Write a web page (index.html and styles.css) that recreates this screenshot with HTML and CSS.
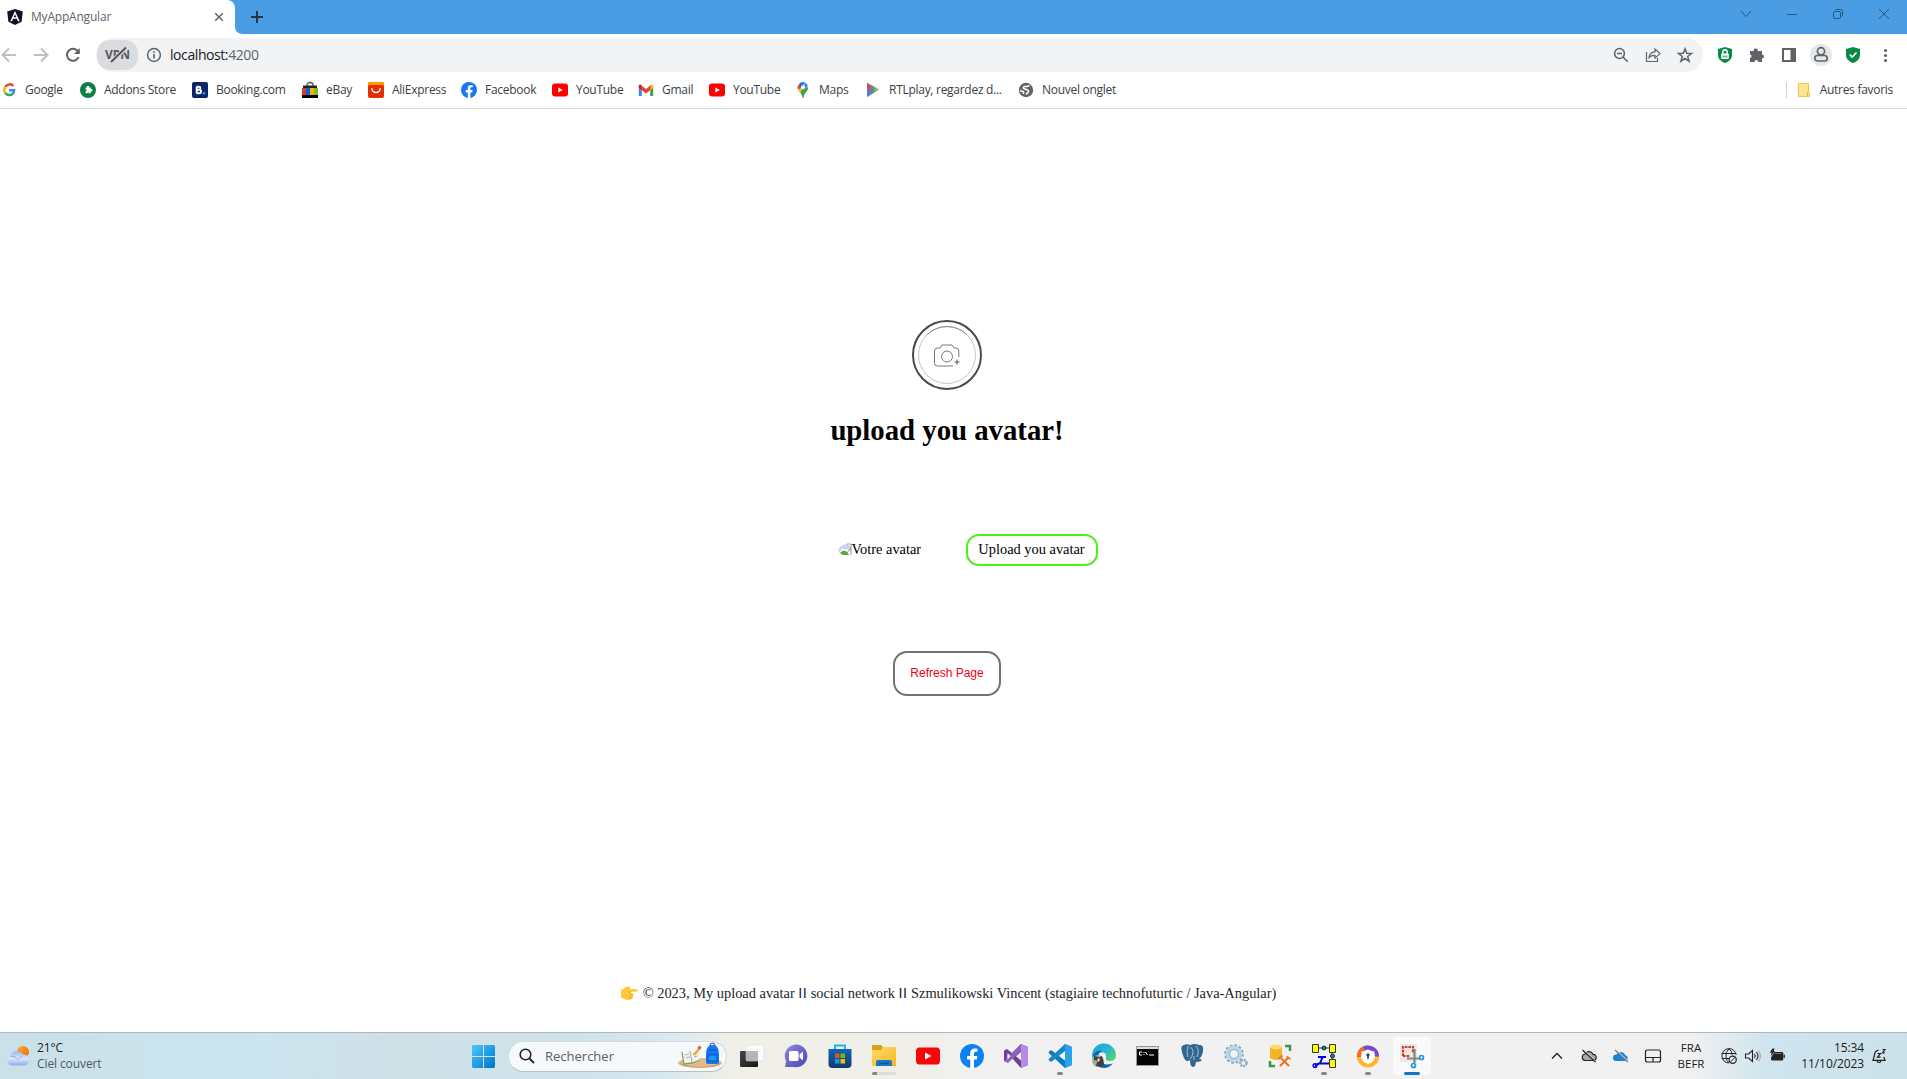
FILE: index.html
```html
<!DOCTYPE html>
<html lang="fr">
<head>
<meta charset="utf-8">
<title>MyAppAngular</title>
<link rel="stylesheet" href="styles.css">
</head>
<body>
<header class="tabstrip">
  <div class="tab">
    <svg class="i16" viewBox="0 0 16 16"><path d="M8 0l7.800 2.600-1.200 10.200L8 16l-6.600-3.200L.2 2.600z" fill="#0c1422"/><path d="M8 2L3.300 12.200h1.800l1-2.400h3.800l1 2.400h1.800zM8 5.200l1.300 3.100H6.700z" fill="#fff" fill-rule="evenodd"/></svg>
    <span class="tab-title">MyAppAngular</span>
    <svg class="tab-close" viewBox="0 0 10 10"><path d="M1.200 1.200l7.600 7.600M8.800 1.200L1.200 8.800" stroke="#5f6368" stroke-width="1.500"/></svg>
  </div>
  <svg class="tab-curve" viewBox="0 0 8 8"><path d="M0 0Q0 8 8 8H0z" fill="#fff"/></svg>
  <svg class="new-tab" viewBox="0 0 12 12"><path d="M6 0v12M0 6h12" stroke="#26323e" stroke-width="2"/></svg>
  <div class="win">
    <svg viewBox="0 0 12 12"><path d="M1 3l5 5.500L11 3"/></svg>
    <svg viewBox="0 0 12 12"><path d="M1 6.500h10"/></svg>
    <svg viewBox="0 0 12 12"><rect x="1.500" y="3.500" width="7" height="7" rx="1.300"/><path d="M3.500 1.500h5a2 2 0 0 1 2 2v5"/></svg>
    <svg viewBox="0 0 12 12"><path d="M1 1l10 10M11 1L1 11"/></svg>
  </div>
</header>

<div class="toolbar">
  <div class="nav">
    <svg class="i16 dim" viewBox="0 0 16 16"><path d="M15 8H2M8 1.500L1.500 8 8 14.500"/></svg>
    <svg class="i16 dim" viewBox="0 0 16 16"><path d="M1 8h13M8 1.500L14.500 8 8 14.500"/></svg>
    <svg class="i16 dark" viewBox="0 0 16 16"><path d="M13.600 10A6 6 0 1 1 12.800 4.200"/><path d="M14.800 1v6H9z" fill="#5f6368" stroke="none"/></svg>
  </div>
  <div class="address">
    <div class="vpn"><span>VPN</span><svg viewBox="0 0 24 18"><path d="M4.500 16.500L20 2" stroke="#dadce0" stroke-width="4"/><path d="M5 16L20 1.500" stroke="#4f5257" stroke-width="1.800"/></svg></div>
    <svg class="info" viewBox="0 0 16 16"><circle cx="8" cy="8" r="6.400" fill="none" stroke="#5f6368" stroke-width="1.500"/><path d="M8 7v4.500M8 4.300v1.600" stroke="#5f6368" stroke-width="1.600"/></svg>
    <span class="url">localhost:<i>4200</i></span>
    <div class="address-actions">
      <svg class="i16" viewBox="0 0 16 16"><circle cx="6.500" cy="6.500" r="4.900"/><path d="M10 10l4.700 4.700M4 6.500h5"/></svg>
      <svg class="i16 thin" viewBox="0 0 16 16"><path d="M1.500 5v9.500h11V11M4 10.500c.5-3.800 2.700-5.500 6-5.700V2l5 4.600-5 4.600V8.300c-2.700-.1-4.500.5-6 2.200z"/></svg>
      <svg class="i16" viewBox="0 0 16 16"><path d="M8 1.800l1.700 4.500 4.800.2-3.800 3 1.400 4.700L8 11.500l-4.100 2.700 1.400-4.700-3.800-3 4.800-.2z"/></svg>
    </div>
  </div>
  <div class="extensions">
    <svg class="i16" viewBox="0 0 16 16"><path d="M8 0l7 2v6c0 4-3 6.500-7 8-4-1.500-7-4-7-8V2z" fill="#0b8a45"/><rect x="4.200" y="6.500" width="7.600" height="5.500" rx=".8" fill="#fff"/><path d="M5.800 7V5a2.200 2.200 0 0 1 4.400 0v2" stroke="#fff" stroke-width="1.400" fill="none"/><path d="M6.200 8.500v2M8 8.500v2M9.800 8.500v2" stroke="#0b8a45"/></svg>
    <svg class="i16" viewBox="0 0 16 16"><path d="M1 4h3.800a2 2 0 1 1 3.900 0H13v3.500a2 2 0 1 1 0 4V15H9.300a1.900 1.900 0 0 0-3.800 0H1v-4a1.900 1.900 0 0 0 0-3.700z" fill="#5f6368"/></svg>
    <svg class="i16" viewBox="0 0 16 16"><path d="M1 1h14v14H1zM3 3v10h6.500V3z" fill="#5f6368" fill-rule="evenodd"/></svg>
    <svg class="profile" viewBox="0 0 22 22"><circle cx="11" cy="11" r="11" fill="#e5e7ea"/><g fill="none" stroke="#5f6368" stroke-width="1.700"><circle cx="11" cy="7.300" r="3.600"/><rect x="4.800" y="11.500" width="12.400" height="5.500" rx="2.700"/></g></svg>
    <svg class="i16" viewBox="0 0 16 16"><path d="M8 0l7 2v6c0 4-3 6.500-7 8-4-1.500-7-4-7-8V2z" fill="#0b8a45"/><path d="M4.800 7.600l2.400 2.400 4.300-4.500" stroke="#fff" stroke-width="1.600" fill="none"/></svg>
    <svg class="i16" viewBox="0 0 16 16"><g fill="#5f6368"><circle cx="8.500" cy="3.500" r="1.600"/><circle cx="8.500" cy="8.500" r="1.600"/><circle cx="8.500" cy="13.500" r="1.600"/></g></svg>
  </div>
</div>

<nav class="bookmarks">
  <a><svg class="i16" viewBox="0 0 16 16"><g fill="none" stroke-width="2.500"><path d="M12.400 4A5 5 0 0 0 4.300 5" stroke="#ea4335"/><path d="M4.300 5a5 5 0 0 0 0 6" stroke="#fbbc05"/><path d="M4.300 11a5 5 0 0 0 7.200 1" stroke="#34a853"/><path d="M11.500 12A5 5 0 0 0 13.100 8.300H8" stroke="#4285f4"/></g></svg><span>Google</span></a>
  <a><svg class="i16" viewBox="0 0 16 16"><circle cx="8" cy="8" r="8" fill="#0b8045"/><path d="M5.500 5.500h1.400a1.200 1.200 0 1 1 2.200 0h1.700v1.700a1.200 1.200 0 1 1 0 2.200v1.800H9.200a1.100 1.100 0 0 0-2 0H5.500V9.500a1.100 1.100 0 0 0 0-2.200z" fill="#fff"/></svg><span>Addons Store</span></a>
  <a><svg class="i16" viewBox="0 0 16 16"><rect width="16" height="16" rx="2" fill="#0b2568"/><path d="M4.700 4.500v7M4.700 4.700h2.200a1.400 1.400 0 0 1 0 3H5h2.300a1.600 1.600 0 0 1 0 3.500H4.700" stroke="#fff" stroke-width="1.900" fill="none"/><circle cx="12" cy="11.300" r="1.300" fill="#1ba5f5"/></svg><span>Booking.com</span></a>
  <a><svg class="i16" viewBox="0 0 16 16"><path d="M5 4V3a3 2.500 0 0 1 6 0v1" stroke="#555" fill="none" stroke-width="1.300"/><path d="M1 3.500h14V6H1z" fill="#222"/><path d="M0 6h4v7H0z" fill="#e53238"/><path d="M4 6h4v7H4z" fill="#0064d2"/><path d="M8 6h4v7H8z" fill="#f5af02"/><path d="M12 6h4v7h-4z" fill="#86b817"/><path d="M0 13h16v3H0z" fill="#000"/></svg><span>eBay</span></a>
  <a><svg class="i16" viewBox="0 0 16 16"><rect width="16" height="16" rx="2" fill="#e62e04"/><path d="M0 4V2a2 2 0 0 1 2-2h12a2 2 0 0 1 2 2v2z" fill="#ff9a00"/><path d="M0 5a2 2 0 0 1 2-2h12a2 2 0 0 1 2 2v5H0z" fill="#e62e04"/><path d="M3.800 6a4.200 4.500 0 0 0 8.400 0" stroke="#fff" stroke-width="1.400" fill="none"/></svg><span>AliExpress</span></a>
  <a><svg class="i16" viewBox="0 0 24 24"><circle cx="12" cy="12" r="12" fill="#1877f2"/><path d="M10.200 24v-8.400H7v-3.500h3.200V9.400c0-3.200 1.900-4.900 4.700-4.900 1.400 0 2.600.2 2.600.2v3.100H16c-1.500 0-2 1-2 1.900v2.400h3.400l-.6 3.500H14V24z" fill="#fff"/></svg><span>Facebook</span></a>
  <a><svg class="i16" viewBox="0 0 16 16"><rect y="1.500" width="16" height="13" rx="3" fill="red"/><path d="M6.300 5.500v5l4.500-2.500z" fill="#fff"/></svg><span>YouTube</span></a>
  <a><svg class="i16" viewBox="0 0 16 16"><path d="M.8 4v10h3V6z" fill="#4285f4"/><path d="M15.200 4v10h-3V6z" fill="#34a853"/><path d="M.8 3v3l3 2.300V4L2.600 2.500z" fill="#c5221f"/><path d="M15.200 3v3l-3 2.300V4l1.200-1.500z" fill="#fbbc04"/><path d="M3 3l5 4 5-4-.8 5.300L8 11.400 3.800 8.300z" fill="#ea4335"/></svg><span>Gmail</span></a>
  <a><svg class="i16" viewBox="0 0 16 16"><rect y="1.500" width="16" height="13" rx="3" fill="red"/><path d="M6.300 5.500v5l4.500-2.500z" fill="#fff"/></svg><span>YouTube</span></a>
  <a><svg class="i16" viewBox="0 0 16 16"><path d="M2.700 5.300C2.700 9 7 10.500 7.500 16h1C9 10.500 13.300 9 13.300 5.300z" fill="#34a853"/><path d="M3 7.500A5.300 5.300 0 0 1 4 2l5 3z" fill="#ea4335"/><path d="M4 2A5.300 5.300 0 0 1 10 .4L6 6z" fill="#1a73e8"/><path d="M10 .4A5.300 5.300 0 0 1 13 4L7 8z" fill="#4285f4"/><path d="M3 7.500L9.500 4l-4.400 7z" fill="#fbbc04"/><circle cx="8" cy="5.300" r="2" fill="#fff"/></svg><span>Maps</span></a>
  <a><svg class="i16" viewBox="0 0 16 16"><defs><linearGradient id="rtl"><stop offset="0" stop-color="#e0404b"/><stop offset=".45" stop-color="#64859c"/><stop offset="1" stop-color="#bfe04a"/></linearGradient></defs><path d="M2 .8L14.500 7.500 2 15z" fill="url(#rtl)"/><path d="M2 7l6 4-6 4z" fill="#3a8ee0" opacity=".8"/></svg><span>RTLplay, regardez d...</span></a>
  <a><svg class="i16" viewBox="0 0 16 16"><circle cx="8" cy="8" r="7.200" fill="#5f6368"/><path d="M11.500 3.500L9 4.500H6.500Q5 5 5.500 6.500L9.500 8q1.500.5.800 2L8 12.500M2 8.500l3.500 1.200V12" stroke="#fff" stroke-width="1.500" fill="none"/></svg><span>Nouvel onglet</span></a>
  <a class="others"><svg class="i16" viewBox="0 0 16 16"><path d="M2.500 1.500h10v9h1v4h-11z" fill="#ffe494" stroke="#f0c64a"/><path d="M11.500 14v-3.500h1" stroke="#e5b52f" fill="none"/></svg><span>Autres favoris</span></a>
</nav>

<main class="page">
  <div class="camera">
    <svg viewBox="0 0 66 66" fill="none"><circle cx="33" cy="33" r="28.500" stroke="#b5b5b5" stroke-width=".8"/><path d="M13 12.800a28.500 28.500 0 0 1 40 0" stroke="#777" stroke-width=".8"/><path d="M44.800 35V29q0-3-3-3H40l-2-3H28l-2 3h-2.500q-3 0-3 3v12.500q0 2.500 3 2.500H39" stroke="#777"/><circle cx="33" cy="34.500" r="5.500" stroke="#777"/><path d="M43 37.500v5M40.500 40h5" stroke="#555"/></svg>
  </div>
  <h1>upload you avatar!</h1>
  <div class="upload-row">
    <div class="avatar">
      <svg viewBox="0 0 15 14"><path d="M1 7Q4 1.500 10 1l4 3v8H5Q2 10 1 7z" fill="#c5d5f4"/><path d="M4 7c2-3 4-1 5 0 2-1 3 0 5 2v3H5Q3 10 3 9z" fill="#fff"/><path d="M3 10q4-5 8 0l1 2H6z" fill="#52a83a"/><path d="M10 1h4v11M8 12l6-7" stroke="#888" stroke-width=".8" fill="none"/></svg><span>Votre avatar</span>
    </div>
    <label class="upload">Upload you avatar</label>
  </div>
  <button class="refresh">Refresh Page</button>
  <footer class="credits">
    <svg viewBox="0 0 17 16"><path d="M0 5q2-.5 4-2.500 2-1.500 5-.8V4h6q1.600 0 1.600 1.300T15 6.700h-5V8h2q1 1 0 2.300.7 1.200-.5 2.300.2 1.500-1.400 2-3 .9-6-.3Q2 13 0 13z" fill="#ffc83d"/><path d="M7.500 7.200H10M7.500 10h4M7 12.500h4.500" stroke="#e99a22" stroke-width=".7"/></svg>
    <p>© 2023, My upload avatar <b>II</b> social network <b>II</b> Szmulikowski Vincent (stagiaire technofuturtic / Java-Angular)</p>
  </footer>
</main>

<div class="taskbar">
  <div class="weather">
    <svg viewBox="0 0 24 20"><defs><linearGradient id="sun" x2="1" y2="1"><stop stop-color="#f6b21c"/><stop offset="1" stop-color="#f2660d"/></linearGradient><linearGradient id="cloud" x2="0" y2="1"><stop stop-color="#96b5ec"/><stop offset=".5" stop-color="#dce7fa"/><stop offset="1" stop-color="#8faeee"/></linearGradient></defs><circle cx="17" cy="6" r="6" fill="url(#sun)"/><path d="M5 19.500a5 5 0 0 1-.6-9.300A7 7 0 0 1 17 8.500a5.600 5.600 0 0 1 2 11z" fill="url(#cloud)"/><path d="M4.500 10.500q5-1 7 3 2-3 5-2.500" stroke="#86a4e3" stroke-width=".8" fill="none"/></svg>
    <div><div class="temp">21°C</div><div class="sky">Ciel couvert</div></div>
  </div>
  <svg class="start" viewBox="0 0 23 23"><defs><linearGradient id="w" x2="1" y2="1"><stop stop-color="#48cbf8"/><stop offset="1" stop-color="#0070cf"/></linearGradient></defs><path d="M1 0h10v11H0V1zM12 0h10l1 1v10H12zM0 12h11v11H1l-1-1zM12 12h11v10l-1 1H12z" fill="url(#w)"/></svg>
  <div class="search">
    <svg class="lens" viewBox="0 0 16 16"><circle cx="6.500" cy="6.500" r="5.300" fill="none" stroke="#222" stroke-width="1.600"/><path d="M10.500 10.500l4.500 4.500" stroke="#222" stroke-width="1.800"/></svg>
    <span>Rechercher</span>
    <svg class="school" viewBox="0 0 44 26"><ellipse cx="22" cy="20" rx="22" ry="5" fill="#e2b98b"/><path d="M1 20q21 8 42 0-4 4.500-21 4.500T1 20z" fill="#c79461"/><path d="M4 9l8-2 8 1 2 9-8 3-8 1z" fill="#f4f5ef"/><path d="M4 9l2 12 8-1 8-3" stroke="#6fae52" stroke-width="1.300" fill="none"/><path d="M12 8l2 11M7 12l4-1M8 15l4-1M15 11l4-1M16 14l3-1" stroke="#9990b0" stroke-width=".8"/><path d="M16 12l5-6" stroke="#f4a928" stroke-width="2.500"/><path d="M20.500 6l2-2.500" stroke="#e95647" stroke-width="3"/><path d="M28 11q0-9 6.500-9T41 11v8q0 2-2 2h-9q-2 0-2-2z" fill="#1475ee"/><path d="M32 3q0-3 2.500-3T37 3" stroke="#174baa" fill="none"/><path d="M30 12h9v6h-9zM31 7h7" stroke="#0755bf" fill="#1996ff"/></svg>
  </div>
  <div class="apps">
    <div><svg viewBox="0 0 24 24"><defs><linearGradient id="tv" x2="1" y2="1"><stop stop-color="#474747"/><stop offset="1" stop-color="#161616"/></linearGradient></defs><rect y="7" width="18" height="16" rx="1" fill="url(#tv)"/><rect x="6" y="1" width="18" height="16" rx="1.500" fill="#fafafa" stroke="#ddd" stroke-width=".5"/><path d="M6 7h12v10H6z" fill="#b4b4b4"/></svg></div>
    <div><svg viewBox="0 0 24 24"><defs><linearGradient id="ch" x2="1" y2="1"><stop stop-color="#9288da"/><stop offset="1" stop-color="#4646b8"/></linearGradient></defs><path d="M1 23l1-6A11.300 11.300 0 1 1 10 23z" fill="url(#ch)"/><rect x="5" y="7" width="9.500" height="10" rx="1.500" fill="#fff"/><path d="M15.500 10.500L19 7.500v9l-3.500-3z" fill="#fff"/></svg></div>
    <div><svg viewBox="0 0 24 24"><defs><linearGradient id="st" x2="0" y2="1"><stop stop-color="#0c67b8"/><stop offset="1" stop-color="#173967"/></linearGradient></defs><path d="M7 6V1.500h10V6" stroke="#20b5ef" stroke-width="2" fill="none"/><path d="M.5 5h23v15q0 4-4 4h-15q-4 0-4-4z" fill="url(#st)"/><path d="M7 9.500h4.500V14H7z" fill="#f25022"/><path d="M12.500 9.500H17V14h-4.500z" fill="#7fba00"/><path d="M7 15h4.500v4.500H7z" fill="#00a4ef"/><path d="M12.500 15H17v4.500h-4.500z" fill="#ffb900"/></svg></div>
    <div class="run multi"><svg viewBox="0 0 24 24"><defs><linearGradient id="fo" x2="1" y2="1"><stop stop-color="#ffdc69"/><stop offset="1" stop-color="#f6b622"/></linearGradient></defs><path d="M0 2q0-1 1-1h8l2 2v4H0z" fill="#dba014"/><path d="M0 6h9l2-3h12q1 0 1 1v18H1q-1 0-1-1z" fill="url(#fo)"/><path d="M4 22v-4q0-2 2-2h12q2 0 2 2v4z" fill="#1878c4"/><path d="M7.500 19.500h9" stroke="#0c5799" stroke-width="1.500"/></svg></div>
    <div><svg viewBox="0 0 24 24"><rect y="3.500" width="24" height="17" rx="3.500" fill="#f60709"/><path d="M9 8.500v7l6.500-3.500z" fill="#fff"/></svg></div>
    <div><svg viewBox="0 0 24 24"><circle cx="12" cy="12" r="12" fill="#0b82f2"/><path d="M10.200 24v-8.400H7v-3.500h3.200V9.400c0-3.200 1.900-4.900 4.700-4.900 1.400 0 2.600.2 2.600.2v3.100H16c-1.500 0-2 1-2 1.900v2.400h3.400l-.6 3.500H14V24z" fill="#fff"/></svg></div>
    <div><svg viewBox="0 0 24 24"><path d="M17 0l7 3v18l-7 3L4 9.500 3 16l-3 1.500v-11L3 5l5 4z" fill="#684593"/><path d="M17 0l7 3v18l-7 3z" fill="#b78ae7"/><path d="M17 0v7L4 19l-4-2 8-8z" fill="#9260c4"/><path d="M3.500 9v6.500l3-3.200zM17 8l-5 4.200 5 4.300z" fill="#f1f1f1"/></svg></div>
    <div class="run"><svg viewBox="0 0 24 24"><path d="M17 0l7 3v18l-7 3L1 9.200q-.8-.8 0-1.600L2.200 6.500q.8-.6 1.600 0L17.500 17z" fill="#0879be"/><path d="M17 0v7L3.800 17.500q-.8.6-1.600 0L1 16.400q-.8-.8 0-1.600z" fill="#1588ca"/><path d="M17 0l7 3v18l-7 3z" fill="#2ba3e8"/></svg></div>
    <div><svg viewBox="0 0 24 24"><defs><linearGradient id="ed" x2="1" y2="1"><stop stop-color="#1e9cd7"/><stop offset=".5" stop-color="#28b8d1"/><stop offset="1" stop-color="#67db52"/></linearGradient></defs><path d="M0 12A12 12 0 0 1 24 11q0 6-6 6-5 0-4-3 1-7-7-5-7 2-6 8z" fill="url(#ed)"/><path d="M1 11q3-5 9-4.500-5 3-4 9 3 7 15 4-8 8-16 2z" fill="#0d65ad"/><circle cx="6" cy="17" r="6" fill="#a8aaa0"/><path d="M4 22l2-8 4-2 2 8-3 3z" fill="#453a3b"/><path d="M2 12l5 1-1 4-4-1z" fill="#3b4148"/><path d="M6 14l2 1-1 3-2-1z" fill="#eed1b0"/></svg></div>
    <div><svg viewBox="0 0 24 24"><rect x=".5" y="2.500" width="22" height="19" fill="#050505" stroke="#999"/><path d="M1 3h21v2H1z" fill="#ddd"/><path d="M6 8H3.500v3H6M8 8v1M8 10v1M9.500 8l2 3M13 11h5" stroke="#fff" fill="none"/></svg></div>
    <div><svg viewBox="0 0 24 24"><path d="M2 2q4-3 8-1 5-2 9 0 5-1 4 6-1 6-4 8 4 0 2 2-2 1-5 1-.5 5-3 5-3 0-3-7-4 3-6-2Q0 4 2 2z" fill="#336791"/><path d="M8 2q-2 6 0 11M16 2q4 4 1 11M10 4q3-1 3 5-1 5-3 6M14 12v4" stroke="#c3d3df" fill="none" stroke-width=".8"/></svg></div>
    <div><svg viewBox="0 0 24 24"><circle cx="10" cy="10" r="8.500" fill="none" stroke="#87a6ba" stroke-width="2.500" stroke-dasharray="2.700 1.750"/><circle cx="10" cy="10" r="6.500" fill="none" stroke="#b9d6e6" stroke-width="3.500"/><circle cx="10" cy="10" r="4.500" fill="#f1f1f1" stroke="#7cadd0"/><circle cx="19.500" cy="19" r="3" fill="#eef" stroke="#8eabbc" stroke-width="2.500" stroke-dasharray="2 .8"/></svg></div>
    <div><svg viewBox="0 0 24 24"><path d="M2 3v11q6 4 12 0V3z" fill="#f1b529"/><ellipse cx="8" cy="3" rx="6" ry="2.500" fill="#ffdb72"/><path d="M17 2h5v5M2 17v5h5" stroke="#439447" stroke-width="2.500" fill="none"/><path d="M12 22l8-8M13 14l8 8" stroke="#e87722" stroke-width="2.200"/><path d="M10.500 15l4-3.500M18.500 12.500l4 2.500" stroke="#e87722" stroke-width="2"/></svg></div>
    <div class="run"><svg viewBox="0 0 24 24"><path d="M6 4h12M20 8v8" stroke="#333"/><path d="M.5.5h6v8h-6zM17.500.5h6v8h-6zM17.500 15.500h6v8h-6z" fill="#ff0" stroke="#333"/><path d="M6 13h8M10.500 13L8 19.500M3 21.500l4-2h10" stroke="#0000e6" stroke-width="2" fill="none"/><circle cx="12" cy="4" r="2" fill="#099" stroke="#222"/><circle cx="20.500" cy="12" r="2" fill="#099" stroke="#222"/><circle cx="3" cy="21.500" r="1.800" fill="none" stroke="#0000e6" stroke-width="1.500"/></svg></div>
    <div class="run"><svg viewBox="0 0 24 24"><circle cx="12" cy="12.500" r="9" fill="none" stroke="#ffb52e" stroke-width="4.200"/><path d="M5 7a9 9 0 0 1 16 5.500" stroke="#7648d2" stroke-width="4.200" fill="none"/><path d="M3 13a9 9 0 0 1 5-8.500" stroke="#f26b27" stroke-width="4.200" fill="none"/><path d="M12 5.500q3 2 6.500 2v5q0 5-6.500 7.500-6.500-2.500-6.500-7.500v-5q3.500 0 6.500-2z" fill="#fff"/><circle cx="12" cy="11" r="1.700" fill="#3c4859"/><path d="M12 11v4" stroke="#3c4859" stroke-width="1.500"/></svg></div>
    <div class="active"><svg viewBox="0 0 24 24"><rect width="17" height="18" rx="1" fill="#e9e9e9"/><path d="M3 12V3h10v6" stroke="#d8390b" stroke-width="2.200" stroke-dasharray="2.600 1" fill="none"/><path d="M3 12h7" stroke="#d8390b" stroke-width="2.200" stroke-dasharray="2.600 1"/><path d="M14.500 5v14M7 14.500h13" stroke="#858585" stroke-width="2.200"/><circle cx="21.500" cy="13.500" r="2" fill="none" stroke="#2398d5" stroke-width="1.700"/><circle cx="13.500" cy="21.500" r="2" fill="none" stroke="#2398d5" stroke-width="1.700"/></svg></div>
  </div>
  <div class="tray">
    <svg class="t1" viewBox="0 0 16 16"><path d="M3 10.500l5-5 5 5" fill="none" stroke="#222" stroke-width="1.400"/></svg>
    <svg class="t2" viewBox="0 0 16 16"><path d="M4 12.500a3.300 3.300 0 0 1 0-6.500 4.500 4.500 0 0 1 8 .3 3.100 3.100 0 0 1 .3 6.200z" fill="#aaa" stroke="#222" stroke-width="1.200"/><path d="M2.500 2L15 14" stroke="#f1f1f1" stroke-width="1.300"/><path d="M1.500 2l13 12" stroke="#222" stroke-width="1.200"/></svg>
    <svg class="t2" viewBox="0 0 16 16"><path d="M3 13a3.200 3.200 0 0 1 .5-6.500 4.800 4.800 0 0 1 8.700.5A3.200 3.200 0 0 1 13 13z" fill="#1686da"/><path d="M2.800 2l13 12" stroke="#f1f1f1" stroke-width="1.300"/><path d="M2 2l13 12" stroke="#777" stroke-width="1.100"/></svg>
    <svg class="t3" viewBox="0 0 16 16"><path d="M2.500 2h11q2 0 2 2v8q0 2-2 2h-11q-2 0-2-2V4q0-2 2-2zM.5 9.500h15M8 9.500V14" fill="none" stroke="#222" stroke-width="1.200"/></svg>
    <div class="lang"><div>FRA</div><div>BEFR</div></div>
    <svg class="t4" viewBox="0 0 16 16"><g fill="none" stroke="#222"><path d="M8 15A7.200 7.200 0 1 1 15.200 7M.8 5.500h14M.8 10.500H8M8 .8q-4 3.500-3 8 .5 4 3 6M8 .8q3 2 3.200 6"/><circle cx="11.700" cy="11.700" r="3.600" stroke-width="1.200"/><path d="M9.300 14.100l4.800-4.800"/></g></svg>
    <svg class="t5" viewBox="0 0 16 16"><g fill="none" stroke="#222" stroke-width="1.100"><path d="M1 6h3l4-3.500v11L4 10H1zM10 6q1.500 2 0 4M12 4q3 4 0 8"/><path d="M14 2.500q4 5.500 0 11" stroke="#aaa"/></g></svg>
    <svg class="t6" viewBox="0 0 16 16"><path d="M5.500 4H13q1.200 0 1.200 1.200v6q0 1.300-1.200 1.300H3.500Q2 12.500 2 11V9.500z" fill="#222"/><path d="M14.500 6.500h1.300v3.500h-1.300z" fill="#222"/><path d="M3.500.5h2L4.800 3H6L1.800 8l.7-3.500H.8z" fill="#222"/><path d="M6 5.500h6.700" stroke="#aaa" stroke-width=".6"/></svg>
    <div class="clock"><div>15:34</div><div>11/10/2023</div></div>
    <svg class="t7" viewBox="0 0 16 16"><path d="M7.500 2.200Q3.500 3 3.300 8L2 12.300h12L12.800 9M6 12.500q.2 2 2 2t2-2" fill="none" stroke="#222" stroke-width="1.200"/><path d="M6.500 5.500h3l-3 3.700h3M11.500 1.500H14L11.500 5H14" fill="none" stroke="#222" stroke-width="1.200"/></svg>
  </div>
</div>
</body>
</html>
```
FILE: styles.css
```css
* { box-sizing: border-box; }
body { margin: 0; width: 1907px; height: 1079px; overflow: hidden; display: flex; flex-direction: column; background: #fff; font: 12px "Open Sans", "Noto Sans", sans-serif; color: #3c4043; }
svg { display: block; flex: none; overflow: visible; }
.i16 { width: 16px; height: 16px; }

.tabstrip { height: 34px; flex: none; background: #4a9de2; display: flex; }
.tab { width: 235px; height: 34px; background: #fff; border-radius: 0 8px 0 0; display: flex; align-items: center; padding: 0 11px 0 7px; }
.tab-title { margin-left: 8px; padding-bottom: 1px; flex: 1; color: #5f6368; letter-spacing: -.2px; white-space: nowrap; }
.tab-close { width: 10px; height: 10px; }
.tab-curve { width: 8px; height: 8px; align-self: flex-end; }
.new-tab { width: 12px; height: 12px; margin: 11px 0 0 8px; }
.win { margin: 8px 17px 0 auto; display: flex; gap: 34px; }
.win svg { width: 12px; height: 12px; fill: none; stroke: #285880; }

.toolbar { height: 38px; flex: none; display: flex; align-items: flex-end; padding: 0 14px 0 1px; }
.nav { width: 95px; height: 34px; display: flex; align-items: center; gap: 16px; }
.nav svg { fill: none; stroke-width: 2; }
.dim { stroke: #bdbfc2; }
.dark { stroke: #5f6368; }
.address { width: 1607px; height: 34px; border-radius: 17px; background: #f1f3f4; display: flex; align-items: center; padding: 0 10px 0 1px; }
.vpn { width: 41px; height: 30px; border-radius: 13px; background: #dadce0; display: grid; place-items: center; font-weight: 700; color: #55585d; }
.vpn > * { grid-area: 1 / 1; }
.vpn span { padding-bottom: 1px; }
.vpn svg { width: 24px; height: 18px; }
.info { width: 16px; height: 16px; margin: 0 8px; }
.url { padding-bottom: 2px; font-size: 14px; color: #202124; letter-spacing: -.42px; }
.url i { font-style: normal; color: #5f6368; }
.address-actions { margin-left: auto; display: flex; gap: 16px; }
.address-actions svg { fill: none; stroke: #5f6368; stroke-width: 1.5; }
.address-actions .thin { stroke-width: 1.2; }
.extensions { margin-left: 14px; height: 34px; display: flex; align-items: center; gap: 16px; }
.profile { width: 22px; height: 22px; margin: 0 -3px; }

.bookmarks { height: 37px; flex: none; border-bottom: 1px solid #d5d7da; display: grid; grid-template-columns: 79px 112px 110px 66px 93px 91px 86px 71px 86px 70px 153px 120px 1fr; padding: 0 14px 0 1px; align-items: center; }
.bookmarks a { display: flex; align-items: center; gap: 8px; white-space: nowrap; letter-spacing: -.28px; }
.bookmarks span { padding-bottom: 1px; }
.bookmarks .others { justify-self: end; height: 16px; border-left: 1px solid #cdcfd2; padding-left: 9px; }

.page { width: 1894px; flex: 1; display: flex; flex-direction: column; align-items: center; padding-top: 211px; font: 14.4px "Liberation Serif", serif; color: #000; }
.camera { width: 70px; height: 70px; border: 2px solid #4a4a4a; border-radius: 50%; }
h1 { margin: 23px 0 0; font-size: 28.8px; line-height: 34px; letter-spacing: -.02px; }
.upload-row { margin: 87px 0 0 40px; display: flex; align-items: center; gap: 45px; }
.avatar { width: 84px; height: 20px; overflow: hidden; display: flex; align-items: center; white-space: nowrap; }
.avatar span { padding-bottom: 1px; }
.avatar svg { width: 15px; height: 14px; }
.upload { width: 132px; height: 32px; line-height: 26px; text-align: center; white-space: nowrap; border: 2px solid #4cf012; border-radius: 13px; }
.refresh { margin-top: 85px; width: 108px; height: 45px; padding: 0 0 2px; border: 2px solid #6c7667; border-radius: 14px; background: #fff; font: 12px "Liberation Sans", sans-serif; color: #f00020; }
.credits { margin: 288px 0 0 3px; display: flex; align-items: center; gap: 5px; color: #212529; }
.credits svg { width: 17px; height: 16px; }
.credits p { margin: 0; line-height: 18px; white-space: nowrap; }
.credits b { font: 14.4px "Liberation Sans", sans-serif; letter-spacing: .4px; }

.taskbar { height: 47px; flex: none; border-top: 1px solid #a9b9bf; display: flex; align-items: center; color: #1b1b1b; background: linear-gradient(90deg, #cbe0e8 0, #cbe5ef 250px, #cfe0e7 390px, #cfe3eb 580px, #d6e8ef 660px, #f0efe8 730px, #f0efe9 930px, #f1f1f1 980px, #f1f1f1 1690px, #cfe4ee 1770px, #cce1ea 100%); }
.weather { width: 472px; padding-left: 6px; display: flex; align-items: center; gap: 7px; line-height: 16px; letter-spacing: -.1px; }
.weather svg { width: 24px; height: 20px; }
.sky { color: #4f5a5f; }
.start { width: 23px; height: 23px; }
.search { margin-left: 13px; width: 219px; height: 31px; border-radius: 16px; background: #f5f9fb; border: 1px solid #d2dcdf; border-bottom-color: #b8c2c4; display: flex; align-items: center; padding: 0 4px 0 10px; font-size: 13px; color: #5b6163; }
.lens { width: 16px; height: 16px; margin-right: 10px; }
.school { width: 44px; height: 26px; margin-left: auto; }
.apps { margin-left: 3px; display: flex; }
.apps div { width: 44px; height: 38px; display: grid; place-items: center; position: relative; }
.apps svg { width: 24px; height: 24px; }
.apps .run::after, .apps .active::after { content: ""; position: absolute; bottom: 0; left: 19px; width: 6px; height: 3px; border-radius: 2px; background: #858585; }
.apps .multi::after { left: 10px; width: 24px; background: linear-gradient(90deg, #858585 5px, #dcdcdc 5px); }
.apps .active { width: 38px; margin: 0 3px; border-radius: 4px; background: #fafafa; }
.apps .active::after { left: 11px; width: 16px; background: #0a78d2; }
.tray { margin: 0 20px 0 auto; display: flex; align-items: center; line-height: 16px; }
.tray svg { width: 16px; height: 16px; }
.t2 { margin-left: 16px; }
.t3 { margin-left: 16px; }
.lang { width: 60px; text-align: center; font-size: 11.5px; }
.t5 { margin-left: 7px; }
.tray .t5 { width: 17px; }
.tray .t6 { margin-left: 8px; }
.clock { width: 79px; text-align: right; white-space: nowrap; letter-spacing: -.1px; }
.t7 { margin-left: 7px; }
```
